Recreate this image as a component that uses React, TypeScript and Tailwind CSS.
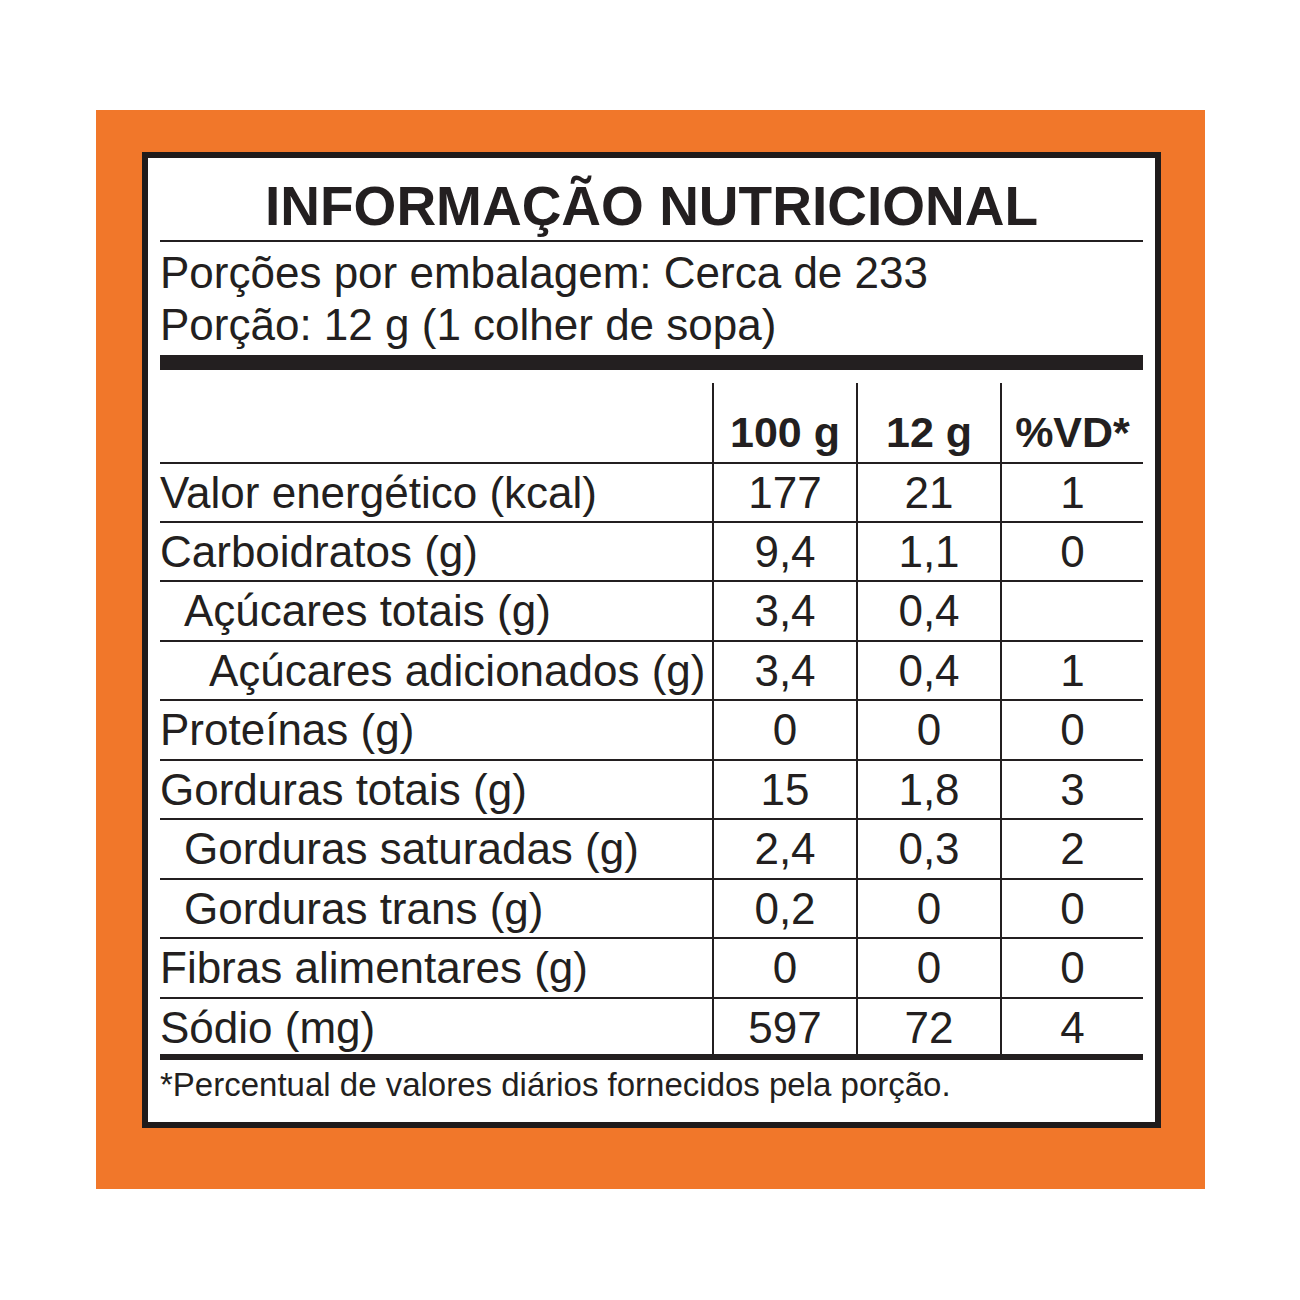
const rows: { label: string; indent: number; g100: string; g12: string; vd: string; h: string }[] = [
  { label: "Valor energético (kcal)", indent: 0, g100: "177", g12: "21", vd: "1", h: "h-[59px]" },
  { label: "Carboidratos (g)", indent: 0, g100: "9,4", g12: "1,1", vd: "0", h: "h-[59px]" },
  { label: "Açúcares totais (g)", indent: 1, g100: "3,4", g12: "0,4", vd: "", h: "h-[60px]" },
  { label: "Açúcares adicionados (g)", indent: 2, g100: "3,4", g12: "0,4", vd: "1", h: "h-[59px]" },
  { label: "Proteínas (g)", indent: 0, g100: "0", g12: "0", vd: "0", h: "h-[60px]" },
  { label: "Gorduras totais (g)", indent: 0, g100: "15", g12: "1,8", vd: "3", h: "h-[59px]" },
  { label: "Gorduras saturadas (g)", indent: 1, g100: "2,4", g12: "0,3", vd: "2", h: "h-[60px]" },
  { label: "Gorduras trans (g)", indent: 1, g100: "0,2", g12: "0", vd: "0", h: "h-[59px]" },
  { label: "Fibras alimentares (g)", indent: 0, g100: "0", g12: "0", vd: "0", h: "h-[60px]" },
  { label: "Sódio (mg)", indent: 0, g100: "597", g12: "72", vd: "4", h: "h-[55px]" },
];

const indentClass = ["pl-0", "pl-[24px]", "pl-[49px]"];

export default function App() {
  return (
    <div className="min-h-[1300px] bg-white pl-[96px] pt-[110px] font-['Liberation_Sans',Arial,sans-serif] text-[#231f20]">
      {/* orange card */}
      <div className="w-[1109px] bg-[#f1772a] pb-[61px] pl-[46px] pr-[44px] pt-[42px]">
        <div className="border-[6px] border-[#1f1b1b] bg-white px-[12px] pb-[12px]">
          {/* title */}
          <h1 className="border-b-2 border-[#231f20] pt-[15px] text-center text-[55px] font-bold leading-[67px]">
            INFORMAÇÃO NUTRICIONAL
          </h1>

          {/* portions */}
          <div className="pt-[6px] text-[44px] leading-[50px]">
            <p>Porções por embalagem: Cerca de 233</p>
            <p className="pt-[2px]">Porção: 12 g (1 colher de sopa)</p>
          </div>
          <div className="mt-[5px] h-[15px] bg-[#231f20]" />

          {/* table */}
          <div className="mt-[13px]">
            <div className="grid h-[81px] grid-cols-[552px_144px_144px_143px] border-b-2 border-[#231f20] text-[43px] font-bold leading-[44px]">
              <div />
              <div className="flex items-end justify-center border-l-2 border-[#231f20] pb-[8px]">100 g</div>
              <div className="flex items-end justify-center border-l-2 border-[#231f20] pb-[8px]">12 g</div>
              <div className="flex items-end justify-center border-l-2 border-[#231f20] pb-[8px]">%VD*</div>
            </div>

            {rows.map((r, i) => {
              const last = i === rows.length - 1;
              return (
                <div
                  key={r.label}
                  className={`grid grid-cols-[552px_144px_144px_143px] text-[44px] leading-[57px] ${r.h} ${
                    last ? "" : "border-b-2 border-[#231f20]"
                  }`}
                >
                  <div className={`whitespace-nowrap ${indentClass[r.indent]}`}>{r.label}</div>
                  <div className="border-l-2 border-[#231f20] text-center">{r.g100}</div>
                  <div className="border-l-2 border-[#231f20] text-center">{r.g12}</div>
                  <div className="border-l-2 border-[#231f20] text-center">{r.vd}</div>
                </div>
              );
            })}
            <div className="h-[6px] bg-[#231f20]" />
          </div>

          {/* footnote */}
          <p className="text-[33px] leading-[50px]">*Percentual de valores diários fornecidos pela porção.</p>
        </div>
      </div>
    </div>
  );
}
